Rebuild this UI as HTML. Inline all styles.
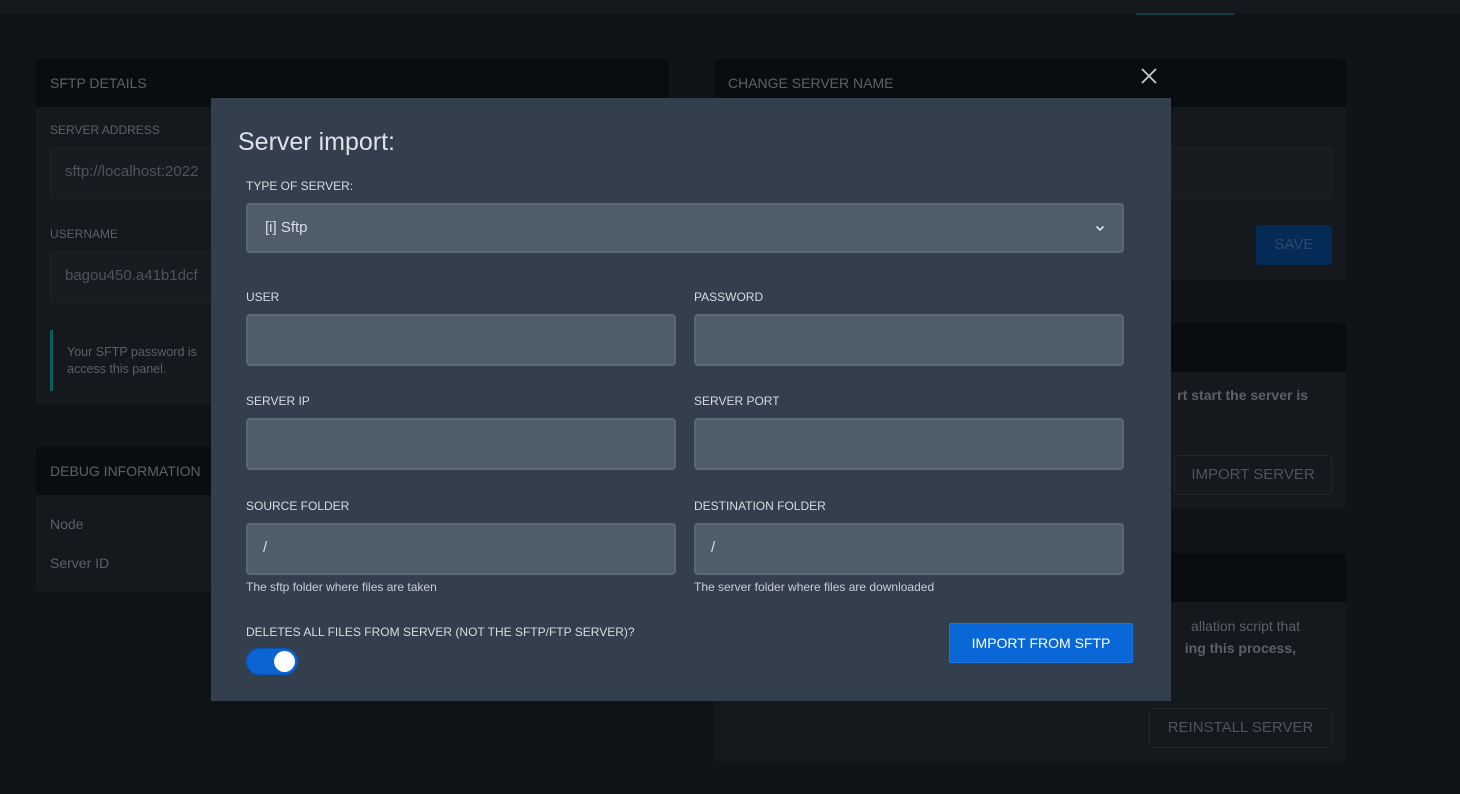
<!DOCTYPE html>
<html><head><meta charset="utf-8"><style>
*{box-sizing:border-box;margin:0;padding:0}
body{width:1460px;height:794px;background:#101318;font-family:"Liberation Sans",sans-serif;position:relative;overflow:hidden}
.abs{position:absolute}
.topbar{left:0;top:0;width:1460px;height:14px;background:#15181d}
.tab{left:1136px;top:13px;width:98px;height:2px;background:#0f3f40}
.panel{position:absolute;background:#15181c;border-radius:4px;overflow:hidden}
.ph{background:#0a0d10;height:48px;padding:16px 14px;color:#5b6168;font-size:14px}
.dim{color:#5b6168}
.dimin{position:absolute;background:#181b20;border:1px solid #1f2328;border-radius:4px;color:#4e545b;font-size:15px;padding:15px 14px;white-space:nowrap}
.btn-d{position:absolute;border:1px solid #22262b;border-radius:4px;color:#4e545b;font-size:15px;text-align:center}
.modal{left:211px;top:98px;width:960px;height:603px;background:#333f4d}
.lbl{position:absolute;color:#d6dce2;font-size:12px}
.inp{position:absolute;background:#4f5d6b;border:2px solid #5b6977;border-radius:4px;color:#d9dee3;font-size:15px;padding:14px 15px}
.help{position:absolute;color:#c7ced5;font-size:12px}
</style></head><body>
<div class="abs topbar"></div><div class="abs tab"></div>

<div class="panel" style="left:36px;top:59px;width:633px;height:345px">
 <div class="ph">SFTP DETAILS</div>
 <div class="abs dim" style="left:14px;top:64px;font-size:12px">SERVER ADDRESS</div>
 <div class="dimin" style="left:14px;top:88px;width:600px;height:52px">sftp://localhost:2022</div>
 <div class="abs dim" style="left:14px;top:168px;font-size:12px">USERNAME</div>
 <div class="dimin" style="left:14px;top:192px;width:600px;height:52px">bagou450.a41b1dcf</div>
 <div class="abs" style="left:14px;top:271px;width:3px;height:61px;background:#0b5d57"></div>
 <div class="abs dim" style="left:31px;top:285px;font-size:12.5px;line-height:17px">Your SFTP password is<br>access this panel.</div>
</div>
<div class="panel" style="left:36px;top:447px;width:633px;height:144px">
 <div class="ph">DEBUG INFORMATION</div>
 <div class="abs dim" style="left:14px;top:69px;font-size:14px">Node</div>
 <div class="abs dim" style="left:14px;top:108px;font-size:14px">Server ID</div>
</div>

<div class="panel" style="left:714px;top:59px;width:632px;height:221px">
 <div class="ph">CHANGE SERVER NAME</div>
 <div class="dimin" style="left:14px;top:88px;width:604px;height:52px"></div>
 <div class="abs" style="left:542px;top:166px;width:76px;height:40px;background:#042a56;border-radius:3px;color:#2b4a70;font-size:15px;text-align:center;line-height:40px">SAVE</div>
</div>
<div class="panel" style="left:714px;top:323px;width:632px;height:185px">
 <div class="ph" style="height:49px"></div>
 <div class="abs dim" style="right:38px;top:64px;font-size:14px;font-weight:bold;white-space:nowrap">rt start the server is</div>
 <div class="btn-d" style="left:460px;top:132px;width:158px;height:40px;line-height:38px">IMPORT SERVER</div>
</div>
<div class="panel" style="left:714px;top:553px;width:632px;height:208px">
 <div class="ph" style="height:49px"></div>
 <div class="abs dim" style="right:46px;top:65px;font-size:14px;white-space:nowrap">allation script that</div>
 <div class="abs dim" style="right:50px;top:87px;font-size:14px;font-weight:bold;white-space:nowrap">ing this process,</div>
 <div class="btn-d" style="left:435px;top:155px;width:183px;height:40px;line-height:38px">REINSTALL SERVER</div>
</div>

<svg class="abs" style="left:1141px;top:68px" width="16" height="16" viewBox="0 0 16 16"><path d="M1 1L15 15M15 1L1 15" stroke="#c4c8cc" stroke-width="1.8"/></svg>

<div class="abs modal">
 <div class="abs" style="left:27px;top:30px;color:#dde2e7;font-size:25px">Server import:</div>
 <div class="lbl" style="left:35px;top:81px">TYPE OF SERVER:</div>
 <div class="inp" style="left:35px;top:105px;width:878px;height:50px;padding:14px 17px">[i] Sftp
  <svg class="abs" style="right:17px;top:20px" width="10" height="7" viewBox="0 0 10 7"><path d="M1.5 1.5L5 5L8.5 1.5" stroke="#dfe3e7" stroke-width="1.6" fill="none"/></svg></div>
 <div class="lbl" style="left:35px;top:192px">USER</div>
 <div class="lbl" style="left:483px;top:192px">PASSWORD</div>
 <div class="inp" style="left:35px;top:216px;width:430px;height:52px"></div>
 <div class="inp" style="left:483px;top:216px;width:430px;height:52px"></div>
 <div class="lbl" style="left:35px;top:296px">SERVER IP</div>
 <div class="lbl" style="left:483px;top:296px">SERVER PORT</div>
 <div class="inp" style="left:35px;top:320px;width:430px;height:52px"></div>
 <div class="inp" style="left:483px;top:320px;width:430px;height:52px"></div>
 <div class="lbl" style="left:35px;top:401px">SOURCE FOLDER</div>
 <div class="lbl" style="left:483px;top:401px">DESTINATION FOLDER</div>
 <div class="inp" style="left:35px;top:425px;width:430px;height:52px">/</div>
 <div class="inp" style="left:483px;top:425px;width:430px;height:52px">/</div>
 <div class="help" style="left:35px;top:482px">The sftp folder where files are taken</div>
 <div class="help" style="left:483px;top:482px">The server folder where files are downloaded</div>
 <div class="lbl" style="left:35px;top:527px">DELETES ALL FILES FROM SERVER (NOT THE SFTP/FTP SERVER)?</div>
 <div class="abs" style="left:35px;top:550px;width:52px;height:27px;border-radius:14px;background:#0a64d4;border:1px solid #0a55b8"></div>
 <div class="abs" style="left:63px;top:553px;width:21px;height:21px;border-radius:50%;background:#fff"></div>
 <div class="abs" style="left:738px;top:525px;width:184px;height:40px;background:#0a67d8;border:1px solid #1a75e3;border-radius:2px;color:#fff;font-size:14px;text-align:center;line-height:38px">IMPORT FROM SFTP</div>
</div>
</body></html>
